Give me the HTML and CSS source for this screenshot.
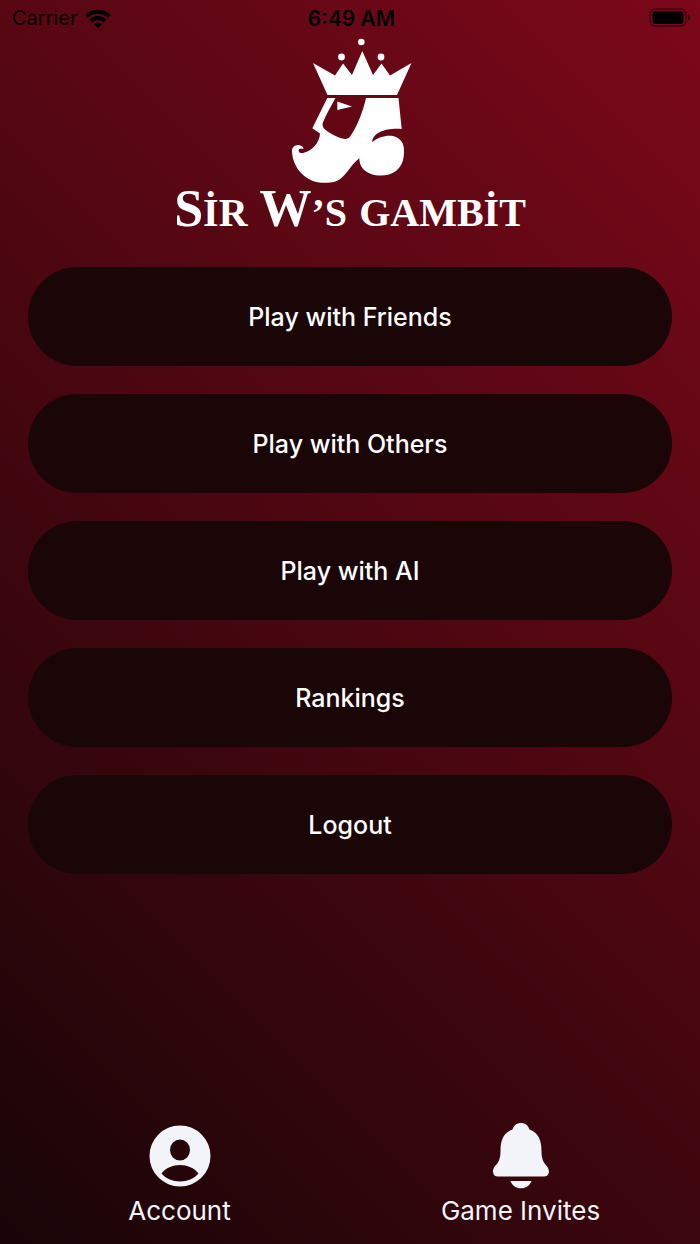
FILE: index.html
```
<!DOCTYPE html>
<html lang="en">
<head>
<meta charset="utf-8">
<meta name="viewport" content="width=device-width, initial-scale=1">
<title>Sir W's Gambit</title>
<link rel="stylesheet" href="styles.css">
</head>
<body>
<div class="screen">
  <header class="status">
    <div class="carrier">
      <span>Carrier</span>
      <svg class="wifi" viewBox="0 0 26 19" aria-hidden="true">
        <g fill="none" stroke="#000" stroke-width="4">
          <path d="M1.500 7.500C8 1 18 1 24.500 7.500"/>
          <path d="M5.800 12C10 8 16 8 20.200 12"/>
        </g>
        <path d="M9 15.200Q13 12 17 15.200L13 19Z"/>
      </svg>
    </div>
    <time class="clock">6:49 AM</time>
    <svg class="battery" viewBox="0 0 42 20" aria-hidden="true">
      <rect x="1" y="1" width="36" height="17" rx="5" fill="none" stroke="#000" stroke-opacity=".5" stroke-width="1.500"/>
      <rect x="3.500" y="3" width="31" height="13" rx="3"/>
      <path d="M39 6.500Q41.500 7.500 41.500 9.500T39 12.500Z" fill-opacity=".55"/>
    </svg>
  </header>

  <div class="brand">
    <svg class="king" viewBox="288 38 124 147" aria-hidden="true">
      <g fill="#fff">
        <circle cx="361.300" cy="42" r="3.300"/>
        <circle cx="341.500" cy="57" r="3.400"/>
        <circle cx="381" cy="57" r="3.400"/>
        <path d="M313 63L335 75.500L343 63.500L352 75L362.300 51L373 75L381.500 63.500L390 75.500L411.500 63L397 95H327.500Z"/>
        <path d="M327.300 98H335.500C331 106 326 115 322.700 123Q322 127 325 129.500C331 134 338 138 345 139Q348.500 139.500 350.500 136C358 125 363 111 366 98H398.500L401.700 129C388 127.500 372 132 372.300 142.300C379 136 390 134.500 396 137C402 140 404 144 404 151C404 160 402 166 396 171C389 176.500 378 176.500 371 174C363 171 359.500 166 359.300 158.300C352 164 349 171 342 177.500C337 182.500 328 183.500 319 182.500C309 181 300 174 296 166C293 161 292 155 292 150C292.500 147 295 144.800 299 145Q303.500 146 303.500 149Q299 147.500 298.500 150.500Q299 153.500 303 153C312 151 319.500 143 320 133.500L312.300 128.300Z"/>
        <path d="M337.300 101.500L352 106.500L337.300 110Z"/>
      </g>
    </svg>
    <h1 class="wordmark" lang="tr">
      <span>S<span class="small">ir</span></span>
      <span>W<span class="small">’s</span></span>
      <span class="small">gambit</span>
    </h1>
  </div>

  <main class="menu">
    <button class="item" type="button">Play with Friends</button>
    <button class="item" type="button">Play with Others</button>
    <button class="item" type="button">Play with AI</button>
    <button class="item" type="button">Rankings</button>
    <button class="item" type="button">Logout</button>
  </main>

  <footer class="tabs">
    <button class="tab" type="button">
      <svg class="icon" viewBox="0 0 68 68" aria-hidden="true">
        <path fill="#f2f4f9" fill-rule="evenodd" d="M34 3.500a30.500 30.500 0 1 0 0 61a30.500 30.500 0 1 0 0-61ZM34 17.500a10 10.500 0 1 1 0 21a10 10.500 0 1 1 0-21ZM15.500 51.500C24 40 44 40 52.500 51.500C44 62 24 62 15.500 51.500Z"/>
      </svg>
      <span>Account</span>
    </button>
    <button class="tab" type="button">
      <svg class="icon" viewBox="0 0 68 68" aria-hidden="true">
        <path fill="#f2f4f9" d="M34 1C38 1 41 3 42.500 7.500C52 11 54.500 19 54.500 29C54.500 44 62 42 62 50Q61 54.500 57 54.500H11Q6.500 54.500 6 50C6 42 13.500 44 13.500 29C13.500 19 16 11 25.500 7.500C27 3 30 1 34 1ZM23.500 59H44.500C43 63.500 39 66.300 34 66.300S25 63.500 23.500 59Z"/>
      </svg>
      <span>Game Invites</span>
    </button>
  </footer>
</div>
</body>
</html>
```
FILE: styles.css
```
* { box-sizing: border-box; }

body {
  margin: 0;
  font-family: Inter, "Liberation Sans", sans-serif;
}

.screen {
  min-height: 100vh;
  display: flex;
  flex-direction: column;
  background: linear-gradient(45deg, #180507, #7c081a);
}

.status {
  display: grid;
  grid-template-columns: 1fr auto 1fr;
  align-items: center;
  height: 36px;
  padding: 0 9px 0 12px;
  font-size: 20px;
}

.carrier { display: flex; align-items: center; gap: 7px; }
.wifi { width: 26px; height: 19px; }
.clock { font-weight: 600; font-size: 21px; }
.battery { width: 42px; height: 20px; justify-self: end; }

.brand {
  display: flex;
  flex-direction: column;
  align-items: center;
  padding-top: 2px;
}

.king { width: 124px; height: 147px; }

.wordmark {
  display: flex;
  align-items: baseline;
  gap: 12px;
  margin: 0;
  color: #fff;
  font: bold 52px/48px "Liberation Serif", serif;
}

.small { font-size: 40px; text-transform: uppercase; }

.menu {
  display: flex;
  flex-direction: column;
  gap: 28px;
  padding: 30px 28px;
}

.item {
  height: 99px;
  padding: 0 24px;
  border: 0;
  border-radius: 50px;
  background: #1a0507;
  color: #fff;
  font: 500 25px/32px Inter, "Liberation Sans", sans-serif;
}

.tabs {
  display: grid;
  grid-template-columns: 1fr 1fr;
  margin-top: auto;
  padding: 0 9px 15px;
}

.tab {
  display: flex;
  flex-direction: column;
  align-items: center;
  gap: 3px;
  padding: 0;
  border: 0;
  background: none;
  color: #f2f4f9;
  font: 26px/36px Inter, "Liberation Sans", sans-serif;
}

.icon { width: 68px; height: 68px; }
```
